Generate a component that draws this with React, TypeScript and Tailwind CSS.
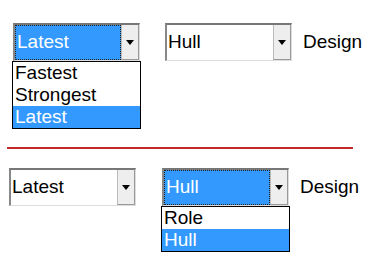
import React from 'react';

type SelectProps = {
  value: string;
  focused?: boolean;
  options?: string[];
  active?: number;
};

function FakeSelect({ value, focused, options, active }: SelectProps) {
  return (
    <div className="relative w-[127px] h-[38px] shrink-0">
      <div className="flex h-full border-t-2 border-l-2 border-t-[#777] border-l-[#888] border-r border-b border-r-[#ddd] border-b-[#ddd] bg-white">
        <div
          className={
            focused
              ? 'flex-1 flex items-center pl-[1px] bg-[#3399ff] text-white border border-dotted border-[#222]'
              : 'flex-1 flex items-center pl-[1px] text-black'
          }
        >
          {value}
        </div>
        <div className="w-[18px] flex items-center justify-center bg-[#eeeeee] border-l border-[#bbb] border-r border-r-[#999] border-b border-b-[#999]">
          <div className="w-0 h-0 border-l-[4px] border-r-[4px] border-t-[5px] border-l-transparent border-r-transparent border-t-black" />
        </div>
      </div>
      {options && (
        <div className="absolute left-[-1px] top-[38px] w-[129px] border border-black bg-white z-10">
          {options.map((o, i) => (
            <div
              key={o}
              className={
                i === active
                  ? 'h-[22px] leading-[22px] pl-[2px] bg-[#3399ff] text-white'
                  : 'h-[22px] leading-[22px] pl-[2px] text-black'
              }
            >
              {o}
            </div>
          ))}
        </div>
      )}
    </div>
  );
}

export default function App() {
  return (
    <div
      className="w-[379px] h-[274px] bg-white text-[19px] text-black overflow-hidden"
      style={{ fontFamily: '"Liberation Sans", Arial, sans-serif' }}
    >
      <div className="flex items-center pt-[23px] pl-[13px]">
        <FakeSelect value="Latest" focused options={['Fastest', 'Strongest', 'Latest']} active={2} />
        <div className="ml-[25px]">
          <FakeSelect value="Hull" />
        </div>
        <span className="ml-[11px]">Design</span>
      </div>

      <div className="ml-[7px] mr-[26px] mt-[86px] h-[2px] bg-[#c0282a]" />

      <div className="flex items-center mt-[19px] pl-[9px]">
        <FakeSelect value="Latest" />
        <div className="ml-[26px]">
          <FakeSelect value="Hull" focused options={['Role', 'Hull']} active={1} />
        </div>
        <span className="ml-[11px]">Design</span>
      </div>
    </div>
  );
}
